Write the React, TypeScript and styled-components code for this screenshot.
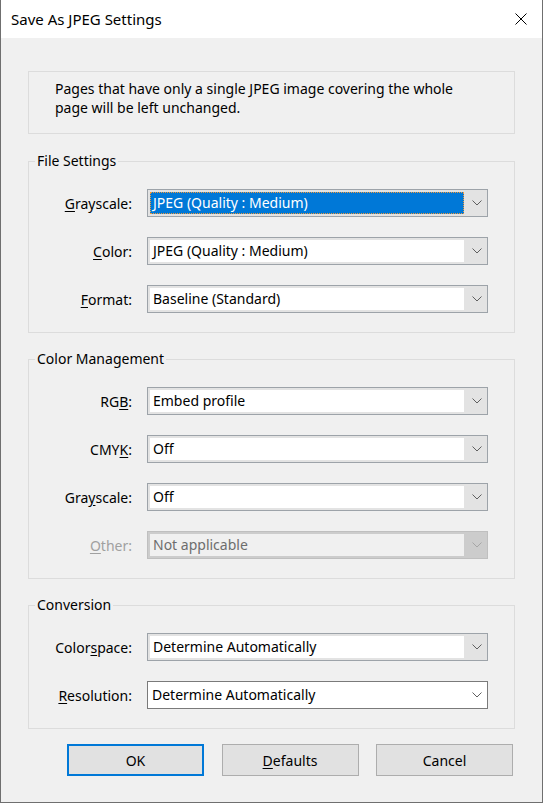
import React from "react";
import styled, { createGlobalStyle } from "styled-components";

const Global = createGlobalStyle`
  html, body { margin: 0; padding: 0; background: #f0f0f0; }
  body { font-family: "Noto Sans", "Segoe UI", sans-serif; }
  * { box-sizing: border-box; }
`;

const Window = styled.div`
  width: 543px;
  height: 803px;
  background: #f0f0f0;
  border: 1px solid #6f6f6f;
  border-top: none;
  display: flex;
  flex-direction: column;
  font-family: "Noto Sans", sans-serif;
  font-size: 14px;
  color: #000;
`;

const TitleBar = styled.div`
  height: 38px;
  flex: 0 0 38px;
  background: #fff;
  display: flex;
  align-items: center;
  justify-content: space-between;
  padding-left: 10px;
`;

const Title = styled.div`
  font-size: 15px;
  line-height: 20px;
  padding-bottom: 1px;
`;

const CloseButton = styled.div`
  width: 42px;
  height: 38px;
  display: flex;
  align-items: center;
  justify-content: center;
`;

const Body = styled.div`
  padding: 33px 27px 0 27px;
  display: flex;
  flex-direction: column;
`;

const InfoBox = styled.div`
  height: 63px;
  border: 1px solid #dcdcdc;
  padding: 7px 0 0 26px;
  line-height: 19px;
`;

const Group = styled.fieldset<{ $first?: boolean }>`
  margin: ${(p) => (p.$first ? "17px" : "16px")} 0 0 0;
  padding: 18px 0 19px 0;
  border: 1px solid #dcdcdc;
  min-width: 0;
`;

const Legend = styled.legend`
  margin-left: 6px;
  padding: 0 2px;
  line-height: 20px;
  font-size: 14px;
`;

const Rows = styled.div`
  display: grid;
  grid-template-columns: 103px 341px;
  column-gap: 15px;
  row-gap: 20px;
  align-items: center;
`;

const Label = styled.div<{ $disabled?: boolean }>`
  text-align: right;
  white-space: nowrap;
  color: ${(p) => (p.$disabled ? "#a0a0a0" : "#000")};
  line-height: 20px;
  padding-top: 1px;
  u {
    text-decoration: underline;
    text-underline-offset: 2px;
  }
`;

type Variant = "normal" | "disabled" | "list";

const SelectBox = styled.div<{ $variant: Variant }>`
  height: 28px;
  display: flex;
  align-items: stretch;
  padding: ${(p) => (p.$variant === "list" ? "0" : "2px 0 2px 2px")};
  border: 1px solid
    ${(p) =>
      p.$variant === "disabled" ? "#bfbfbf" : p.$variant === "list" ? "#7a7a7a" : "#9da3a9"};
  background: ${(p) =>
    p.$variant === "disabled" ? "#cccccc" : p.$variant === "list" ? "#ffffff" : "#e3e3e3"};
`;

const SelectValue = styled.div<{ $variant: Variant; $focused?: boolean }>`
  flex: 0 0 ${(p) => (p.$variant === "list" ? "316px" : "314px")};
  padding-left: ${(p) => (p.$variant === "list" ? "4px" : "3px")};
  line-height: ${(p) => (p.$variant === "list" ? "26px" : "22px")};
  white-space: nowrap;
  overflow: hidden;
  background: ${(p) =>
    p.$focused
      ? "#0078d7"
      : p.$variant === "disabled"
      ? "#f0f0f0"
      : "#ffffff"};
  color: ${(p) => (p.$focused ? "#fff" : p.$variant === "disabled" ? "#6d6d6d" : "#000")};
  outline: ${(p) => (p.$focused ? "1px dotted #f29a3a" : "none")};
  outline-offset: -1px;
`;

const Arrow = styled.div`
  flex: 1;
  display: flex;
  align-items: center;
  justify-content: center;
  padding-left: 3px;
`;

const ButtonRow = styled.div`
  margin-top: 15px;
  display: flex;
  gap: 17.5px;
  padding-left: 39px;
`;

const Button = styled.div<{ $default?: boolean }>`
  width: 137px;
  height: 32px;
  display: flex;
  align-items: center;
  justify-content: center;
  background: #e1e1e1;
  border: ${(p) => (p.$default ? "2px solid #0078d7" : "1px solid #adadad")};
  font-size: 14px;
  u {
    text-underline-offset: 2px;
  }
`;

const Chevron: React.FC<{ color: string }> = ({ color }) => (
  <svg width="10" height="6" viewBox="0 0 10 6">
    <path d="M0.5 0.5 L5 5 L9.5 0.5" fill="none" stroke={color} strokeWidth="1" />
  </svg>
);

const Select: React.FC<{ value: string; variant?: Variant; focused?: boolean }> = ({
  value,
  variant = "normal",
  focused,
}) => (
  <SelectBox $variant={variant}>
    <SelectValue $variant={variant} $focused={focused}>
      {value}
    </SelectValue>
    <Arrow>
      <Chevron color={variant === "disabled" ? "#a6a6a6" : "#5f5f5f"} />
    </Arrow>
  </SelectBox>
);

const Field: React.FC<{
  before?: string;
  mnemonic: string;
  after?: string;
  value: string;
  variant?: Variant;
  focused?: boolean;
}> = ({ before = "", mnemonic, after = "", value, variant, focused }) => (
  <>
    <Label $disabled={variant === "disabled"}>
      {before}
      <u>{mnemonic}</u>
      {after}
    </Label>
    <Select value={value} variant={variant} focused={focused} />
  </>
);

export default function App() {
  return (
    <>
      <Global />
      <Window>
        <TitleBar>
          <Title>Save As JPEG Settings</Title>
          <CloseButton>
            <svg width="12" height="12" viewBox="0 0 12 12">
              <path d="M0.5 0.5 L11.5 11.5 M11.5 0.5 L0.5 11.5" stroke="#000" strokeWidth="1" />
            </svg>
          </CloseButton>
        </TitleBar>
        <Body>
          <InfoBox>
            Pages that have only a single JPEG image covering the whole
            <br />
            page will be left unchanged.
          </InfoBox>

          <Group $first>
            <Legend>File Settings</Legend>
            <Rows>
              <Field mnemonic="G" after="rayscale:" value="JPEG (Quality : Medium)" focused />
              <Field mnemonic="C" after="olor:" value="JPEG (Quality : Medium)" />
              <Field mnemonic="F" after="ormat:" value="Baseline (Standard)" />
            </Rows>
          </Group>

          <Group>
            <Legend>Color Management</Legend>
            <Rows>
              <Field before="RG" mnemonic="B" after=":" value="Embed profile" />
              <Field before="CMY" mnemonic="K" after=":" value="Off" />
              <Field before="Gra" mnemonic="y" after="scale:" value="Off" />
              <Field mnemonic="O" after="ther:" value="Not applicable" variant="disabled" />
            </Rows>
          </Group>

          <Group>
            <Legend>Conversion</Legend>
            <Rows>
              <Field before="Color" mnemonic="s" after="pace:" value="Determine Automatically" />
              <Field mnemonic="R" after="esolution:" value="Determine Automatically" variant="list" />
            </Rows>
          </Group>

          <ButtonRow>
            <Button $default>OK</Button>
            <Button>
              <span>
                <u>D</u>efaults
              </span>
            </Button>
            <Button>Cancel</Button>
          </ButtonRow>
        </Body>
      </Window>
    </>
  );
}
